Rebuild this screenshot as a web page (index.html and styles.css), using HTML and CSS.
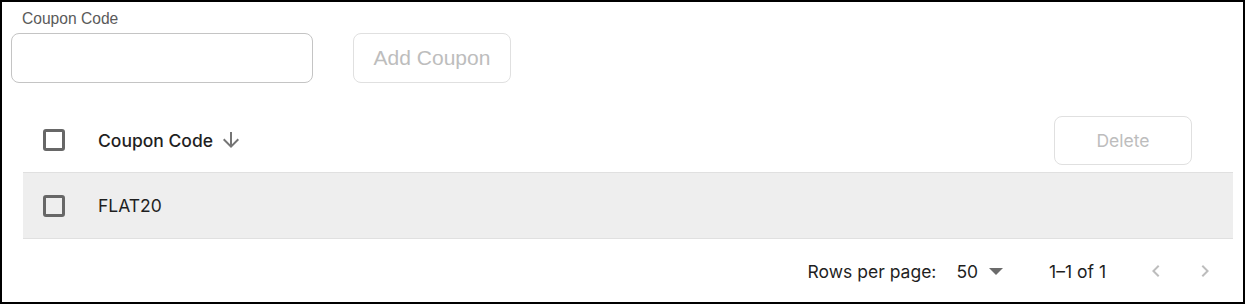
FILE: index.html
```html
<!DOCTYPE html>
<html>
<head>
<meta charset="utf-8">
<link rel="stylesheet" href="styles.css">
</head>
<body>
<div class="frame">
  <div class="form-row">
    <div class="field">
      <label class="field-label">Coupon Code</label>
      <input class="field-input" type="text">
    </div>
    <button class="btn btn-add" disabled>Add Coupon</button>
  </div>

  <div class="table">
    <div class="row head">
      <span class="checkbox"></span>
      <span class="col-title">Coupon Code
        <svg class="sort-icon" viewBox="0 0 24 24"><path d="M20 12l-1.41-1.41L13 16.17V4h-2v12.17l-5.58-5.59L4 12l8 8 8-8z"/></svg>
      </span>
      <button class="btn btn-delete" disabled>Delete</button>
    </div>
    <div class="row body-row">
      <span class="checkbox"></span>
      <span class="cell">FLAT20</span>
    </div>
    <div class="footer">
      <span class="rpp-label">Rows per page:</span>
      <span class="rpp-select">50
        <svg class="drop-icon" viewBox="7 10 10 5"><path d="M7 10l5 5 5-5z"/></svg>
      </span>
      <span class="range">1–1 of 1</span>
      <span class="nav">
        <svg class="nav-icon" viewBox="0 0 24 24"><path d="M15.41 16.59L10.83 12l4.58-4.59L14 6l-6 6 6 6 1.41-1.41z"/></svg>
        <svg class="nav-icon" viewBox="0 0 24 24"><path d="M8.59 16.59L13.17 12 8.59 7.41 10 6l6 6-6 6-1.41-1.41z"/></svg>
      </span>
    </div>
  </div>
</div>
</body>
</html>
```

FILE: styles.css
```css
* { box-sizing: border-box; }
html, body { margin: 0; padding: 0; background: #fff; }
body { font-family: Inter, "Noto Sans", sans-serif; color: #1f1f1f; }

.frame {
  width: 1245px;
  height: 304px;
  border: 2px solid #000;
  background: #fff;
  overflow: hidden;
}

.form-row {
  display: flex;
  align-items: flex-end;
  padding: 9px 0 0 9px;
}
.field { display: flex; flex-direction: column; }
.field-label {
  font-family: "Liberation Sans", Arial, sans-serif;
  font-size: 15.6px;
  line-height: 16px;
  color: #5a5a5a;
  margin-left: 11px;
  margin-bottom: 6px;
}
.field-input {
  width: 302px;
  height: 50px;
  border: 1px solid #c4c4c4;
  border-radius: 8px;
  outline: none;
  background: #fff;
}
.btn {
  font-family: Inter, "Noto Sans", sans-serif;
  background: #fff;
  border: 1px solid #e0e0e0;
  border-radius: 8px;
  color: #bdbdbd;
  cursor: default;
  padding: 0;
}
.btn-add {
  font-family: "Liberation Sans", Arial, sans-serif;
  margin-left: 40px;
  width: 158px;
  height: 50px;
  font-size: 21px;
}

.table {
  margin: 25px 0 0 21px;
  width: 1210px;
}
.row {
  display: flex;
  align-items: center;
  height: 64px;
  padding-left: 20px;
}
.head { border-bottom: 1px solid #e0e0e0; padding-right: 41px; height: 65px; }
.body-row { background: #eeeeee; border-bottom: 1px solid #e0e0e0; height: 66px; }

.checkbox {
  width: 22px;
  height: 22px;
  border: 3px solid #676767;
  border-radius: 3px;
  flex: none;
}
.col-title {
  margin-left: 33px;
  font-size: 17.5px;
  font-weight: 500;
  color: #1f1f1f;
  display: flex;
  align-items: center;
}
.sort-icon {
  width: 24px;
  height: 24px;
  fill: #757575;
  margin-left: 6px;
}
.btn-delete {
  margin-left: auto;
  width: 138px;
  height: 49px;
  font-size: 17.5px;
}
.cell {
  margin-left: 33px;
  font-size: 17.5px;
  color: #1f1f1f;
}

.footer {
  display: flex;
  align-items: center;
  justify-content: flex-end;
  height: 64px;
  font-size: 17.5px;
  color: #1f1f1f;
  padding-right: 16px;
}
.rpp-select {
  display: flex;
  align-items: center;
  margin-left: 20px;
}
.drop-icon {
  width: 14px;
  height: 7px;
  fill: #6b6b6b;
  margin-left: 11px;
}
.range { margin-left: 46px; }
.nav { display: flex; margin-left: 38px; gap: 25px; }
.nav-icon { width: 24px; height: 24px; fill: #bdbdbd; }
```
